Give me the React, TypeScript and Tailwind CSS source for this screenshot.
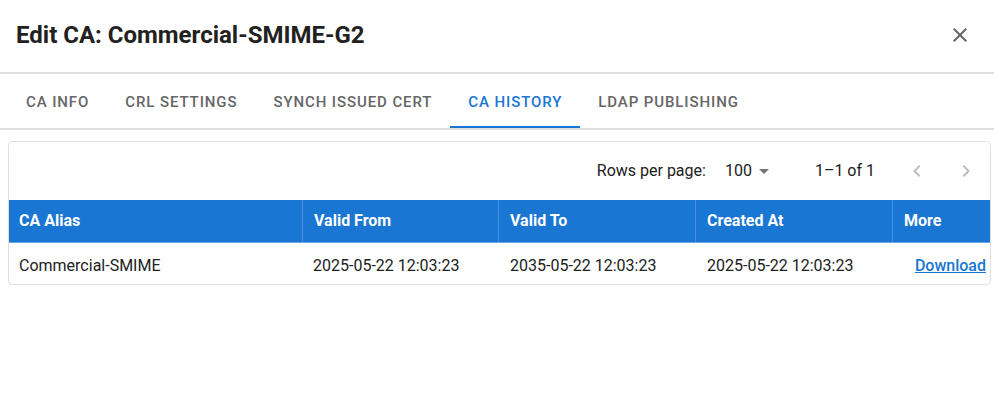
import React from 'react';

const tabs = ['CA Info', 'CRL Settings', 'Synch Issued Cert', 'CA History', 'LDAP Publishing'];

const columns = ['CA Alias', 'Valid From', 'Valid To', 'Created At', 'More'];

const rows = [
  {
    alias: 'Commercial-SMIME',
    validFrom: '2025-05-22 12:03:23',
    validTo: '2035-05-22 12:03:23',
    createdAt: '2025-05-22 12:03:23',
  },
];

function CloseIcon() {
  return (
    <svg viewBox="0 0 24 24" className="w-6 h-6 fill-[#666666]">
      <path d="M19 6.41 17.59 5 12 10.59 6.41 5 5 6.41 10.59 12 5 17.59 6.41 19 12 13.41 17.59 19 19 17.59 13.41 12z" />
    </svg>
  );
}

function ChevronLeft() {
  return (
    <svg viewBox="0 0 24 24" className="w-6 h-6 fill-[#bdbdbd]">
      <path d="M15.41 16.59 10.83 12l4.58-4.59L14 6l-6 6 6 6z" />
    </svg>
  );
}

function ChevronRight() {
  return (
    <svg viewBox="0 0 24 24" className="w-6 h-6 fill-[#bdbdbd]">
      <path d="M8.59 16.59 13.17 12 8.59 7.41 10 6l6 6-6 6z" />
    </svg>
  );
}

function ArrowDropDown() {
  return (
    <svg viewBox="0 0 24 24" className="w-6 h-6 fill-[#757575]">
      <path d="M7 10l5 5 5-5z" />
    </svg>
  );
}

export default function App() {
  const active = 'CA History';

  return (
    <div className="w-[994px] h-[409px] bg-white font-['Roboto','Liberation_Sans',sans-serif] text-[rgba(0,0,0,0.87)]">
      {/* Dialog title */}
      <div className="flex items-center justify-between h-[72px] pb-[3px] pl-4 pr-[22px]">
        <h2 className="text-[24px] font-bold text-[#212121] leading-none">Edit CA: Commercial-SMIME-G2</h2>
        <button className="flex items-center justify-center">
          <CloseIcon />
        </button>
      </div>

      {/* Tabs */}
      <div className="border-t-2 border-b-2 border-[#e0e0e0] flex h-[58px] px-2">
        {tabs.map((tab) => (
          <div
            key={tab}
            className={`relative flex items-center pt-[2px] px-[18px] text-[15px] font-medium uppercase tracking-[0.06em] ${
              tab === active ? 'text-[#1976d2]' : 'text-[#666666]'
            }`}
          >
            {tab}
            {tab === active && <span className="absolute left-0 right-0 bottom-0 h-[2px] bg-[#1976d2]" />}
          </div>
        ))}
      </div>

      {/* Table card */}
      <div className="mt-[11px] ml-2 mr-[3px] border border-[#e0e0e0] rounded overflow-hidden">
        <div className="flex items-center justify-end h-[58px] pr-3 text-[16px] text-[#212121]">
          <span>Rows per page:</span>
          <span className="ml-[19px]">100</span>
          <ArrowDropDown />
          <span className="ml-[39px]">1–1 of 1</span>
          <span className="ml-[30px]">
            <ChevronLeft />
          </span>
          <span className="ml-[25px]">
            <ChevronRight />
          </span>
        </div>

        <div className="grid grid-cols-[294px_196px_197px_197px_1fr] h-[43px] bg-[#1976d2] border-b border-[#6aa3e3] text-white text-[16px] font-bold">
          {columns.map((col, i) => (
            <div
              key={col}
              className={`flex items-center ${i === 0 ? 'pl-[10px]' : 'pl-[11px]'} ${
                i < columns.length - 1 ? 'border-r border-[#4a8fdb]' : ''
              }`}
            >
              {col}
            </div>
          ))}
        </div>

        {rows.map((row) => (
          <div
            key={row.alias}
            className="grid grid-cols-[294px_196px_197px_197px_1fr] h-[41px] pt-[5px] text-[16px] text-[#212121]"
          >
            <div className="flex items-center pl-[10px]">{row.alias}</div>
            <div className="flex items-center pl-[10px]">{row.validFrom}</div>
            <div className="flex items-center pl-[11px]">{row.validTo}</div>
            <div className="flex items-center pl-[11px]">{row.createdAt}</div>
            <div className="flex items-center justify-end pr-1">
              <a href="#" className="text-[#1976d2] underline font-medium">
                Download
              </a>
            </div>
          </div>
        ))}
      </div>
    </div>
  );
}
